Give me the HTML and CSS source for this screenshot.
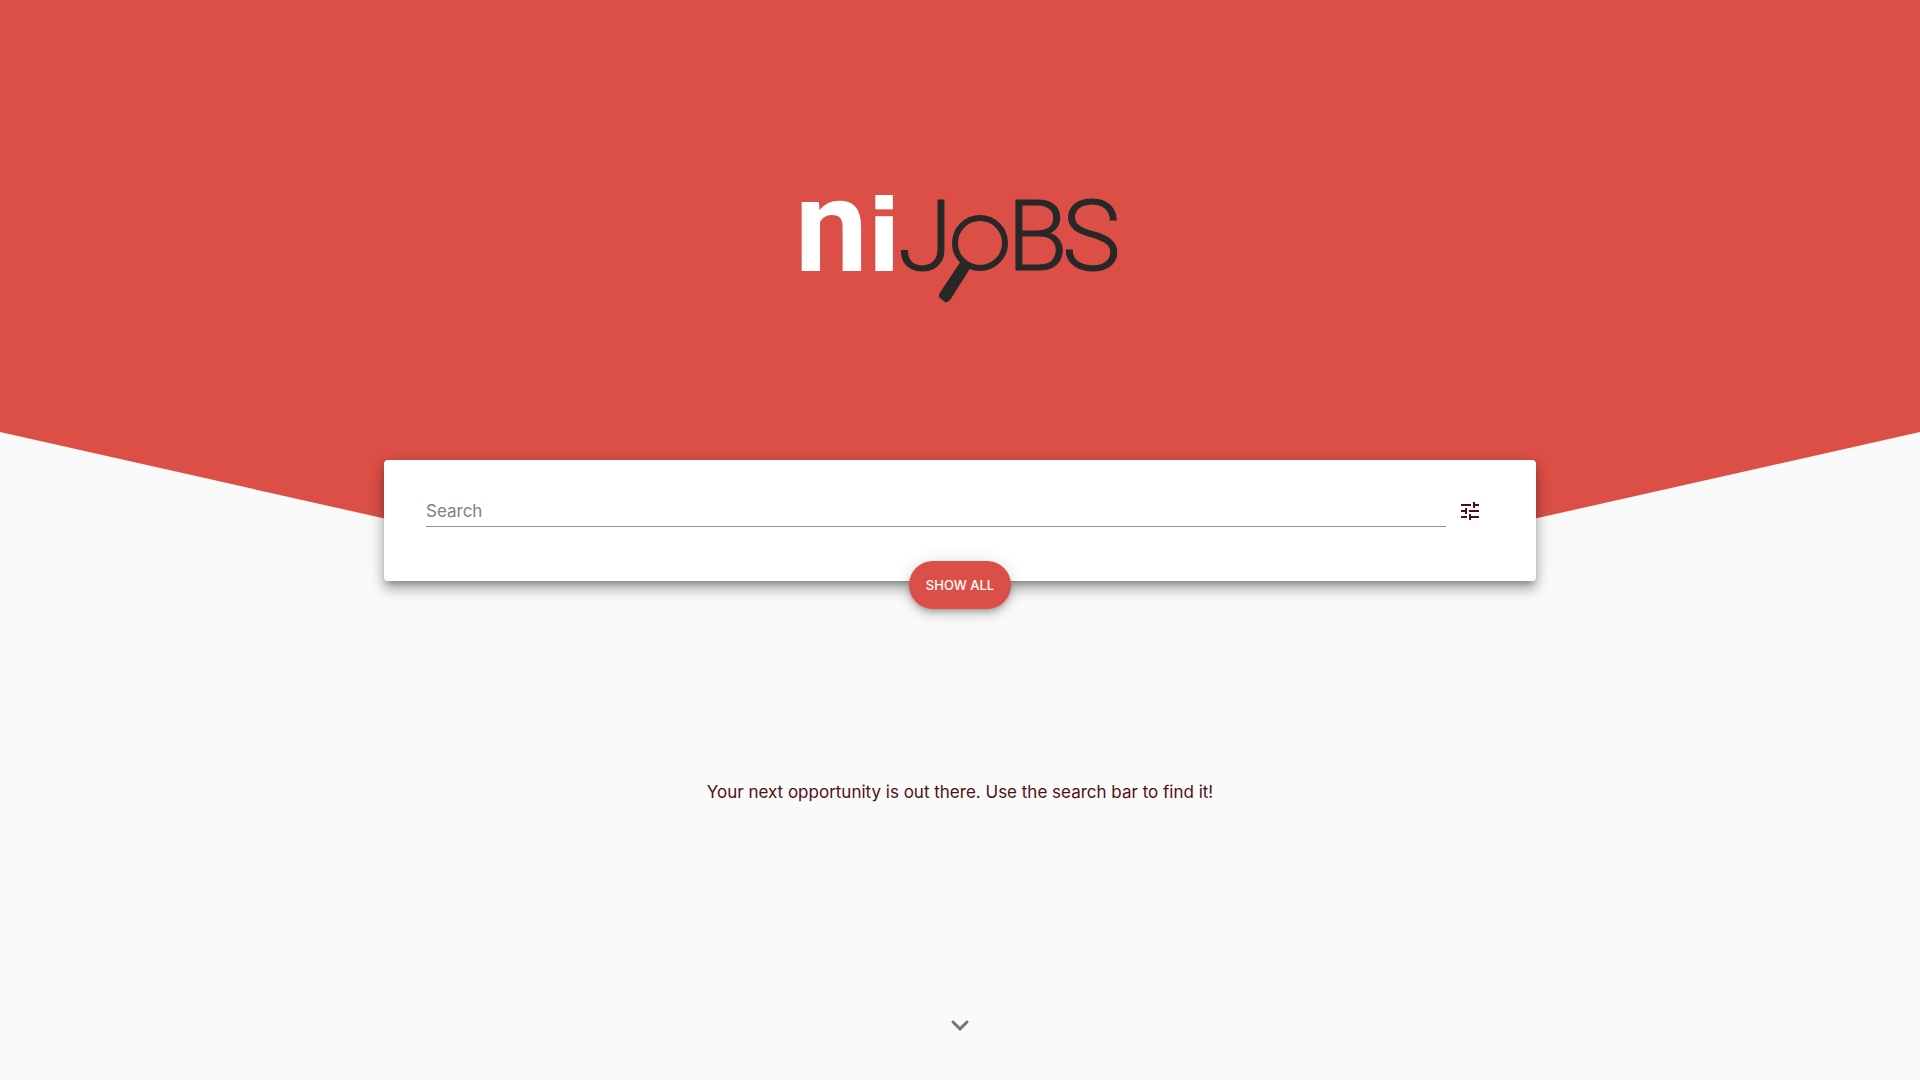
FILE: index.html
```html
<!DOCTYPE html>
<html lang="en">
<head>
<meta charset="utf-8">
<meta name="viewport" content="width=device-width, initial-scale=1">
<title>NIJobs</title>
<link rel="stylesheet" href="styles.css">
</head>
<body>
<main class="page">
  <header class="hero">
    <svg class="logo" viewBox="0 0 320 112" role="img" aria-label="NIJobs">
      <text class="logo-ni" y="77"><tspan class="logo-n" x="-5">n</tspan><tspan class="logo-i" x="67">i</tspan></text>
      <text class="logo-jobs" y="76"><tspan x="98">J</tspan><tspan x="207">B</tspan><tspan x="262">S</tspan></text>
      <circle class="lens" cx="180" cy="49" r="25"/>
      <path class="handle" d="M161 67 171 73 152 103Q149 109 145 108L141 105Q137 102 141 97Z"/>
    </svg>
  </header>
  <form class="search">
    <div class="search-row">
      <input class="search-input" type="search" placeholder="Search" aria-label="Search">
      <button class="filter" type="button" aria-label="Advanced search">
        <svg class="icon" viewBox="0 0 24 24"><path d="M3 17v2h6v-2H3zM3 5v2h10V5H3zm10 16v-2h8v-2h-8v-2h-2v6h2zM7 9v2H3v2h4v2h2V9H7zm14 4v-2H11v2h10zm-6-4h2V7h4V5h-4V3h-2v6z"/></svg>
      </button>
    </div>
    <button class="submit" type="submit">SHOW ALL</button>
  </form>
  <p class="message">Your next opportunity is out there. Use the search bar to find it!</p>
  <a class="more" href="#more" aria-label="Scroll down">
    <svg class="chevron" viewBox="0 0 36 36"><path d="M11 15 18 22 25 15"/></svg>
  </a>
</main>
</body>
</html>
```
FILE: styles.css
```css
* { box-sizing: border-box; }

body {
  margin: 0;
  background: #fafafa;
  color: #4f1014;
  font: 17px/24px Inter, sans-serif;
}

.page {
  display: flex;
  flex-direction: column;
  align-items: center;
  min-height: 100vh;
}

.hero {
  display: flex;
  justify-content: center;
  width: 100%;
  height: 50vh;
  padding-top: 18vh;
  background: #dc4f46;
  clip-path: polygon(0 0, 100% 0, 100% 80%, 75% 100%, 25% 100%, 0 80%);
}

.logo { width: 320px; height: 112px; overflow: visible; }
.logo-ni { fill: #fff; font-weight: 700; }
.logo-n { font-family: Roboto, sans-serif; font-size: 130px; }
.logo-i { font-family: "DejaVu Sans", sans-serif; font-size: 100px; }
.logo-jobs {
  fill: #282828;
  stroke: #282828;
  stroke-width: 1;
  font-family: Roboto, sans-serif;
  font-size: 99px;
  font-weight: 300;
}
.lens { fill: none; stroke: #282828; stroke-width: 6; }
.handle { fill: #282828; }

.search {
  display: flex;
  flex-direction: column;
  align-items: center;
  z-index: 1;
  width: 60%;
  margin-top: -80px;
  padding: 32px 42px 0;
  border-radius: 4px;
  background: #fff;
  box-shadow: 0 5px 6px -3px rgb(0 0 0 / 30%), 0 9px 12px 1px rgb(0 0 0 / 18%), 0 3px 16px 2px rgb(0 0 0 / 14%);
}

.search-row { display: flex; align-items: center; width: 100%; }

.search-input {
  flex: 1;
  min-width: 0;
  height: 31px;
  padding: 0;
  border: 0;
  border-bottom: 1px solid #949494;
  outline: 0;
  background: none;
  color: inherit;
  font: inherit;
}
.search-input::placeholder { color: #808080; opacity: 1; }

.filter {
  display: grid;
  place-items: center;
  width: 48px;
  height: 38px;
  padding: 0;
  border: 0;
  background: none;
  color: inherit;
}
.icon { width: 24px; height: 24px; fill: currentColor; }

.submit {
  height: 48px;
  margin: 31px 0 -28px;
  padding: 0 17px;
  border: 0;
  border-radius: 24px;
  background: #dc4f46;
  color: #fff;
  font: 500 13px/24px Inter, sans-serif;
  box-shadow: 0 3px 5px -1px rgb(0 0 0 / 20%), 0 6px 10px rgb(0 0 0 / 14%), 0 1px 18px rgb(0 0 0 / 12%);
}

.message { margin: 199px 0 0; text-align: center; }

.more { margin-top: auto; margin-bottom: 37px; color: #757575; }
.chevron { display: block; width: 36px; height: 36px; fill: none; stroke: currentColor; stroke-width: 3; stroke-linecap: round; }
```
